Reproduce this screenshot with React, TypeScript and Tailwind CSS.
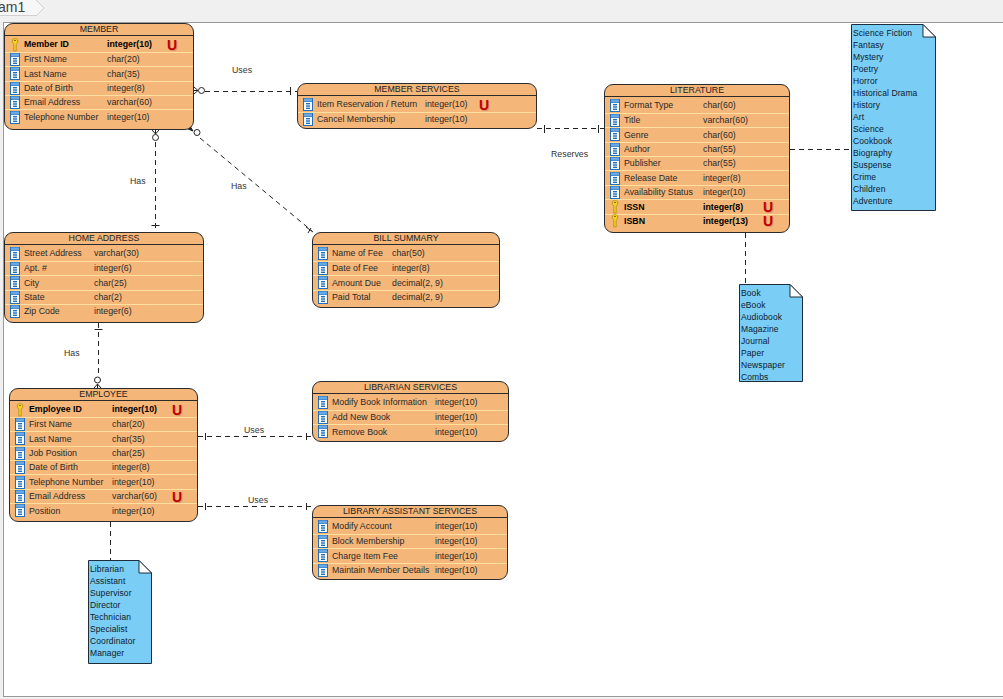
import React from "react";

type Row = { name: string; type: string; isKey?: boolean; unique?: boolean };

type Entity = {
  title: string;
  x: number;
  y: number;
  w: number;
  h: number;
  nameW: number;
  uniqueW: number;
  rows: Row[];
};

const entities: Entity[] = [
  {
    title: "MEMBER",
    x: 4,
    y: 23,
    w: 190,
    h: 107,
    nameW: 83,
    uniqueW: 60,
    rows: [
      { name: "Member ID", type: "integer(10)", isKey: true, unique: true },
      { name: "First Name", type: "char(20)" },
      { name: "Last Name", type: "char(35)" },
      { name: "Date of Birth", type: "integer(8)" },
      { name: "Email Address", type: "varchar(60)" },
      { name: "Telephone Number", type: "integer(10)" },
    ],
  },
  {
    title: "MEMBER SERVICES",
    x: 297,
    y: 83,
    w: 240,
    h: 46,
    nameW: 108,
    uniqueW: 54,
    rows: [
      { name: "Item Reservation / Return", type: "integer(10)", unique: true },
      { name: "Cancel Membership", type: "integer(10)" },
    ],
  },
  {
    title: "LITERATURE",
    x: 604,
    y: 84,
    w: 186,
    h: 149,
    nameW: 79,
    uniqueW: 60,
    rows: [
      { name: "Format Type", type: "char(60)" },
      { name: "Title", type: "varchar(60)" },
      { name: "Genre", type: "char(60)" },
      { name: "Author", type: "char(55)" },
      { name: "Publisher", type: "char(55)" },
      { name: "Release Date", type: "integer(8)" },
      { name: "Availability Status", type: "integer(10)" },
      { name: "ISSN", type: "integer(8)", isKey: true, unique: true },
      { name: "ISBN", type: "integer(13)", isKey: true, unique: true },
    ],
  },
  {
    title: "HOME ADDRESS",
    x: 4,
    y: 232,
    w: 200,
    h: 91,
    nameW: 70,
    uniqueW: 60,
    rows: [
      { name: "Street Address", type: "varchar(30)" },
      { name: "Apt. #", type: "integer(6)" },
      { name: "City", type: "char(25)" },
      { name: "State", type: "char(2)" },
      { name: "Zip Code", type: "integer(6)" },
    ],
  },
  {
    title: "BILL SUMMARY",
    x: 312,
    y: 232,
    w: 188,
    h: 76,
    nameW: 60,
    uniqueW: 60,
    rows: [
      { name: "Name of Fee", type: "char(50)" },
      { name: "Date of Fee", type: "integer(8)" },
      { name: "Amount Due", type: "decimal(2, 9)" },
      { name: "Paid Total", type: "decimal(2, 9)" },
    ],
  },
  {
    title: "EMPLOYEE",
    x: 9,
    y: 388,
    w: 189,
    h: 134,
    nameW: 83,
    uniqueW: 60,
    rows: [
      { name: "Employee ID", type: "integer(10)", isKey: true, unique: true },
      { name: "First Name", type: "char(20)" },
      { name: "Last Name", type: "char(35)" },
      { name: "Job Position", type: "char(25)" },
      { name: "Date of Birth", type: "integer(8)" },
      { name: "Telephone Number", type: "integer(10)" },
      { name: "Email Address", type: "varchar(60)", unique: true },
      { name: "Position", type: "integer(10)" },
    ],
  },
  {
    title: "LIBRARIAN SERVICES",
    x: 312,
    y: 381,
    w: 197,
    h: 61,
    nameW: 103,
    uniqueW: 60,
    rows: [
      { name: "Modify Book Information", type: "integer(10)" },
      { name: "Add New Book", type: "integer(10)" },
      { name: "Remove Book", type: "integer(10)" },
    ],
  },
  {
    title: "LIBRARY ASSISTANT SERVICES",
    x: 312,
    y: 505,
    w: 196,
    h: 75,
    nameW: 103,
    uniqueW: 60,
    rows: [
      { name: "Modify Account", type: "integer(10)" },
      { name: "Block Membership", type: "integer(10)" },
      { name: "Charge Item Fee", type: "integer(10)" },
      { name: "Maintain Member Details", type: "integer(10)" },
    ],
  },
];

const notes = [
  {
    x: 851,
    y: 24,
    w: 85,
    h: 187,
    lines: [
      "Science Fiction",
      "Fantasy",
      "Mystery",
      "Poetry",
      "Horror",
      "Historical Drama",
      "History",
      "Art",
      "Science",
      "Cookbook",
      "Biography",
      "Suspense",
      "Crime",
      "Children",
      "Adventure",
    ],
  },
  {
    x: 739,
    y: 284,
    w: 64,
    h: 98,
    lines: ["Book", "eBook", "Audiobook", "Magazine", "Journal", "Paper", "Newspaper", "Combs"],
  },
  {
    x: 88,
    y: 560,
    w: 64,
    h: 104,
    lines: ["Librarian", "Assistant", "Supervisor", "Director", "Technician", "Specialist", "Coordinator", "Manager"],
  },
];

const labels = [
  { text: "Uses", x: 232, y: 64 },
  { text: "Reserves", x: 551, y: 148 },
  { text: "Has", x: 130, y: 175 },
  { text: "Has", x: 231, y: 180 },
  { text: "Has", x: 64, y: 347 },
  { text: "Uses", x: 244, y: 424 },
  { text: "Uses", x: 248, y: 494 },
];

function ColumnIcon() {
  return (
    <svg width="10" height="13" viewBox="0 0 10 13" className="shrink-0">
      <rect x="0" y="0" width="10" height="13" fill="#1f6fbd" />
      <rect x="1" y="0.5" width="8" height="3" fill="#6aa8e4" />
      <rect x="1" y="4" width="8" height="8" fill="#ffffff" />
      <rect x="3" y="5" width="4" height="1.4" fill="#1f6fbd" />
      <rect x="3" y="7.3" width="4" height="1.4" fill="#1f6fbd" />
      <rect x="3" y="9.6" width="4" height="1.4" fill="#1f6fbd" />
    </svg>
  );
}

function KeyIcon() {
  return (
    <svg width="10" height="14" viewBox="0 0 10 14" className="shrink-0">
      <path
        d="M2.4 1.6 C2.4 .4 7.6 .4 7.6 1.6 L7.6 4.6 L6.2 6 L6.2 13 L3.8 13 L3.8 6 L2.4 4.6 Z"
        fill="#f6d21f"
        stroke="#a98a10"
        strokeWidth="0.7"
      />
      <rect x="4" y="2" width="2" height="1" fill="#8a7010" />
    </svg>
  );
}

function EntityBox({ e }: { e: Entity }) {
  return (
    <div
      className="absolute flex flex-col rounded-[9px] border border-[#2b2b2b] bg-[#f4b679] overflow-hidden"
      style={{ left: e.x, top: e.y, width: e.w, height: e.h }}
    >
      <div className="h-[11px] shrink-0 border-b border-[#2b2b2b] box-content flex items-center justify-center text-[8.8px] leading-none text-[#222]">
        {e.title}
      </div>
      <div className="flex flex-col pt-[1.5px]">
        {e.rows.map((r, i) => (
          <div
            key={r.name}
            className={`flex items-center h-[14.4px] shrink-0 text-[8.8px] leading-none ${
              i > 0 ? "border-t border-[#fce0a0]" : ""
            } ${r.isKey ? "font-bold text-black" : "text-[#2a2a2a]"}`}
          >
            <div className="w-[19px] pl-[5px] shrink-0 flex items-center">
              {r.isKey ? <KeyIcon /> : <ColumnIcon />}
            </div>
            <span className="whitespace-nowrap shrink-0" style={{ width: e.nameW }}>
              {r.name}
            </span>
            <span className="whitespace-nowrap shrink-0" style={{ width: e.uniqueW }}>
              {r.type}
            </span>
            {r.unique && (
              <span className="text-[14px] font-bold text-[#c00000] leading-none [text-shadow:1px_1px_0_#d98f6a]">
                U
              </span>
            )}
          </div>
        ))}
      </div>
    </div>
  );
}

function NoteBox({ n }: { n: (typeof notes)[number] }) {
  return (
    <div className="absolute" style={{ left: n.x, top: n.y, width: n.w, height: n.h }}>
      <svg width={n.w} height={n.h} className="absolute inset-0">
        <path
          d={`M.5 .5 H${n.w - 13} L${n.w - 0.5} 13 V${n.h - 0.5} H.5 Z`}
          fill="#7acdf5"
          stroke="#1f2d3a"
        />
        <path d={`M${n.w - 13} .5 V13 H${n.w - 0.5} Z`} fill="#ffffff" stroke="#1f2d3a" />
      </svg>
      <div className="relative pl-[2px] pt-[3px] flex flex-col text-[8.5px] tracking-[0.1px] text-[#10202c]">
        {n.lines.map((l) => (
          <div key={l} className="h-[12px] leading-[12px] whitespace-nowrap">
            {l}
          </div>
        ))}
      </div>
    </div>
  );
}

function Connectors() {
  const dash = { stroke: "#222", strokeDasharray: "5 4", fill: "none" };
  const mark = { stroke: "#222", fill: "none" };
  const circle = { stroke: "#222", fill: "#fff" };
  return (
    <svg width="1003" height="699" className="absolute left-0 top-0">
      {/* member -> member services */}
      <path d="M205 91.5 H297" {...dash} />
      <circle cx="201.5" cy="90.5" r="3" {...circle} />
      <path d="M194 87 L198 90.5 L194 94 M194 90.5 H198" {...mark} />
      <path d="M290.5 87 V95" {...mark} />
      {/* member -> home address */}
      <path d="M155.5 142 V232" {...dash} />
      <circle cx="155.5" cy="137.5" r="3" {...circle} />
      <path d="M152 130 L155.5 134 L159 130 M155.5 130 V134" {...mark} />
      <path d="M151.5 225.5 H159.5" {...mark} />
      {/* member -> bill summary */}
      <path d="M200 138 L312 231" {...dash} />
      <circle cx="197" cy="132.5" r="3" {...circle} />
      <path d="M190 126 L193 131 L188 129" stroke="#222" fill="#222" />
      <path d="M308 233 L311 228 M306 227 L313 232" {...mark} />
      {/* member services -> literature */}
      <path d="M537 128.5 H604" {...dash} />
      <path d="M544.5 125 V133 M598.5 125 V133" {...mark} />
      {/* literature -> notes */}
      <path d="M790 149.5 H851" {...dash} />
      <path d="M745.5 233 V284" {...dash} />
      {/* home address -> employee */}
      <path d="M98.5 323 V377" {...dash} />
      <path d="M94.5 329.5 H102.5" {...mark} />
      <circle cx="97.5" cy="380" r="3" {...circle} />
      <path d="M94 388 L97.5 384 L101 388 M97.5 384 V388" {...mark} />
      {/* employee -> services */}
      <path d="M198 436.5 H312" {...dash} />
      <path d="M205.5 433 V440 M306.5 433 V440" {...mark} />
      <path d="M198 506.5 H312" {...dash} />
      <path d="M205.5 503 V510 M306.5 503 V510" {...mark} />
      {/* employee -> note */}
      <path d="M110.5 522 V560" {...dash} />
    </svg>
  );
}

export default function App() {
  return (
    <div
      className="relative w-[1003px] h-[699px] overflow-hidden bg-[#f0f0f0]"
      style={{ fontFamily: '"Liberation Sans", Arial, sans-serif' }}
    >
      {/* tab strip */}
      <div className="h-[22px] flex items-start">
        <div className="relative h-[16px] w-[36px] bg-[#f7f7f7] border-b border-[#d0d0d0] text-[14px] leading-[15px] text-[#444]">
          <span className="block whitespace-nowrap -ml-[2px]">am1</span>
          <svg width="10" height="17" className="absolute left-[36px] top-0">
            <path d="M0 16 L8 8 L0 0" fill="#f7f7f7" stroke="#d0d0d0" />
          </svg>
        </div>
      </div>
      {/* canvas */}
      <div className="absolute left-[3px] top-[22px] w-[1000px] h-[675px] bg-white border-l border-t border-b border-[#999]" />
      <Connectors />
      {entities.map((e) => (
        <EntityBox key={e.title} e={e} />
      ))}
      {notes.map((n) => (
        <NoteBox key={n.x} n={n} />
      ))}
      {labels.map((l) => (
        <div
          key={l.x}
          className="absolute text-[8.8px] leading-[12px] text-[#333]"
          style={{ left: l.x, top: l.y }}
        >
          {l.text}
        </div>
      ))}
    </div>
  );
}
